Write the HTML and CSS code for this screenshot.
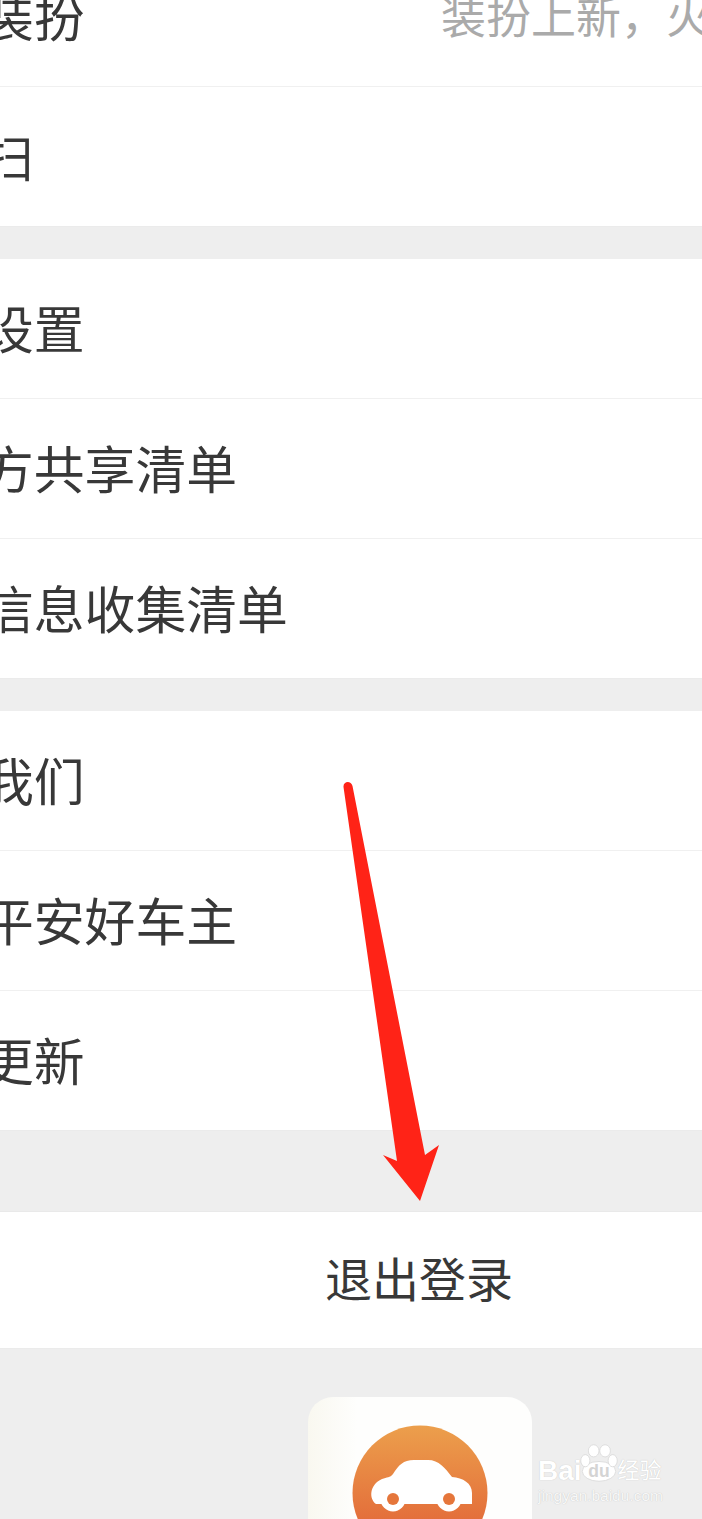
FILE: index.html
```html
<!DOCTYPE html>
<html lang="zh-CN">
<head>
    <meta charset="UTF-8">
    <meta name="viewport" content="width=device-width, initial-scale=1.0">
    <title>设置</title>
    <link rel="stylesheet" href="styles.css">
</head>

<body>
<div class="page">
    <div class="group">
        <div class="row">
            <span class="row-title">装扮</span>
            <span class="row-note">装扮上新，火</span>
        </div>
        <div class="row"><span class="row-title">扫</span></div>
    </div>

    <div class="group">
        <div class="row"><span class="row-title">设置</span></div>
        <div class="row"><span class="row-title">方共享清单</span></div>
        <div class="row"><span class="row-title">信息收集清单</span></div>
    </div>

    <div class="group">
        <div class="row"><span class="row-title">我们</span></div>
        <div class="row"><span class="row-title">平安好车主</span></div>
        <div class="row"><span class="row-title">更新</span></div>
    </div>

    <div class="group group-logout">
        <div class="row row-center">退出登录</div>
    </div>

    <div class="footer">
        <div class="app-logo">
            <svg class="app-icon" viewBox="0 0 136 136" width="136" height="136">
                <defs>
                    <linearGradient id="orange" x1="0" y1="0" x2="0" y2="1">
                        <stop offset="0" stop-color="#ec9f4c"/>
                        <stop offset="1" stop-color="#e05a33"/>
                    </linearGradient>
                </defs>
                <circle cx="68" cy="68" r="67.5" fill="url(#orange)"/>
                <path d="M24 79 C17 74 17 60 30 54 C35 52 38 53 41 49 C47 40 51 35 62 35 L76 35 C87 35 93 43 100 52 C111 53 120 58 120 68 L120 79 Z" fill="#fff"/>
                <circle cx="41" cy="74" r="12.5" fill="#fff"/>
                <circle cx="97" cy="74" r="12.5" fill="#fff"/>
                <circle cx="41" cy="74" r="6" fill="#e5763b"/>
                <circle cx="97" cy="74" r="6" fill="#e5763b"/>
            </svg>
        </div>
    </div>
</div>

<!-- baidu watermark -->
<div class="watermark">
    <div class="mark-top">
        <span class="mark-bai">Bai</span>
        <svg class="mark-paw" viewBox="0 0 50 50" width="38" height="40">
            <ellipse cx="25" cy="36" rx="22" ry="13" fill="#fff" stroke="#d6d6d6"/>
            <ellipse cx="7" cy="22" rx="6" ry="8" fill="#fff" stroke="#d6d6d6"/>
            <ellipse cx="18" cy="9" rx="7" ry="8" fill="#fff" stroke="#d6d6d6"/>
            <ellipse cx="33" cy="9" rx="7" ry="8" fill="#fff" stroke="#d6d6d6"/>
            <ellipse cx="43" cy="22" rx="6" ry="8" fill="#fff" stroke="#d6d6d6"/>
            <text x="25" y="43" text-anchor="middle" class="mark-du">du</text>
        </svg>
        <span class="mark-cn">经验</span>
    </div>
    <div class="mark-url">jingyan.baidu.com</div>
</div>

<!-- red arrow drawn over the screenshot -->
<svg class="arrow" viewBox="0 0 702 1519" width="702" height="1519">
    <path d="M343.5 787 C343 781 351 780 352.5 786 L425 1155 L439 1145 L420 1201 L383 1155 L397 1161 Z" fill="#ff2317"/>
</svg>
</body>
</html>
```

FILE: styles.css
```css
* {
    box-sizing: border-box;
    margin: 0;
    padding: 0;
}

body {
    position: relative;
    width: 702px;
    height: 1519px;
    overflow: hidden;
    background: #eeeeee;
    color: #383838;
    font-family: "Liberation Sans", "Noto Sans CJK SC", sans-serif;
}

.page {
    margin-top: -53px;
}

.group {
    background: white;
    margin-bottom: 32px;
    border-bottom: 1px solid #ebebeb;
}

.group-logout {
    margin-top: 80px;
    margin-bottom: 0;
    border-top: 1px solid #e9e9e9;
}

.row {
    display: flex;
    align-items: center;
    justify-content: space-between;
    height: 140px;
    border-bottom: 1px solid #f0f0f0;
    white-space: nowrap;
    overflow: hidden;
}

.row:last-child {
    height: 139px;
    border-bottom: none;
}

.row-title {
    flex: none;
    font-size: 50.8px;
    padding-bottom: 4px;
    margin-left: -17px;
}

.row-note {
    flex: none;
    margin-left: auto;
    width: 261px;
    overflow: hidden;
    font-size: 45px;
    padding-bottom: 4px;
    color: #aaa;
}

.group-logout .row-center {
    justify-content: center;
    height: 136px;
    font-size: 47px;
    padding-left: 136px;
    padding-bottom: 7px;
}

.footer {
    display: flex;
    justify-content: center;
    height: 170px;
    padding: 48px 0 0 138px;
    overflow: hidden;
}

.app-logo {
    flex: none;
    display: flex;
    justify-content: center;
    align-items: flex-start;
    width: 224px;
    height: 224px;
    padding-top: 28px;
    border-radius: 25px;
    background: linear-gradient(90deg, #f9f8f0, #fefefd 22%, #fefefd);
}

.app-icon {
    display: block;
}

.watermark {
    position: absolute;
    left: 538px;
    top: 1443px;
    width: 130px;
    color: #fff;
}

.mark-top {
    display: flex;
    align-items: flex-end;
    height: 40px;
}

.mark-bai {
    font-size: 28px;
    font-weight: bold;
    line-height: 24px;
    text-shadow: 0 0 1px #bbb;
}

.mark-paw {
    flex: none;
    margin-left: -2px;
}

.mark-du {
    font-size: 23px;
    font-weight: bold;
    fill: #d4d4d4;
}

.mark-cn {
    font-size: 22px;
    line-height: 24px;
    text-shadow: 0 0 1px #bbb;
}

.mark-url {
    font-size: 15.5px;
    line-height: 18px;
    margin-top: 4px;
    white-space: nowrap;
    color: #f8f8f8;
    text-shadow: 0 0 1px #bbb;
}

.arrow {
    position: absolute;
    left: 0;
    top: 0;
}
```
